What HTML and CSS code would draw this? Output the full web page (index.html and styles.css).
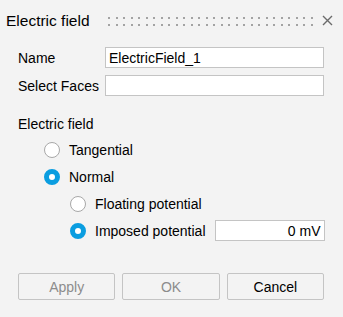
FILE: index.html
```html
<!DOCTYPE html>
<html lang="en">
<head>
    <meta charset="UTF-8">
    <title>Electric field</title>
    <link rel="stylesheet" href="styles.css">
</head>
<body>
    <div class="dialog">
        <div class="titlebar">
            <span class="title">Electric field</span>
            <svg class="grip" width="206" height="9" viewBox="0 0 206 9">
                <defs>
                    <pattern id="dots" width="15" height="7" patternUnits="userSpaceOnUse">
                        <rect x="0" y="0" width="2" height="2" fill="#a3a3a3"/>
                        <rect x="8" y="0" width="2" height="2" fill="#a3a3a3"/>
                    </pattern>
                </defs>
                <rect x="0" y="0" width="206" height="9" fill="url(#dots)"/>
            </svg>
            <svg class="close" width="11" height="11" viewBox="0 0 11 11">
                <path d="M1 1 L10 10 M10 1 L1 10" stroke="#6b6b6b" stroke-width="1.4" fill="none"/>
            </svg>
        </div>

        <!-- Name / faces -->
        <div class="fields">
            <label for="name">Name</label>
            <input type="text" id="name" value="ElectricField_1">
            <label for="faces">Select Faces</label>
            <input type="text" id="faces" value="">
        </div>

        <!-- Electric field options -->
        <div class="group">
            <div class="group-label">Electric field</div>
            <div class="radio-row level1">
                <span class="radio"></span>
                <span>Tangential</span>
            </div>
            <div class="radio-row level1">
                <span class="radio checked"></span>
                <span>Normal</span>
            </div>
            <div class="radio-row level2">
                <span class="radio"></span>
                <span>Floating potential</span>
            </div>
            <div class="radio-row level2">
                <span class="radio checked"></span>
                <span>Imposed potential</span>
                <input type="text" class="value-input" value="0 mV">
            </div>
        </div>

        <div class="buttons">
            <button disabled>Apply</button>
            <button disabled>OK</button>
            <button>Cancel</button>
        </div>
    </div>
</body>
</html>
```

FILE: styles.css
```css
body {
    margin: 0;
    background-color: #f3f3f3;
    font-family: "Liberation Sans", Arial, sans-serif;
    font-size: 14px;
    color: #000;
}
.dialog {
    width: 343px;
    height: 317px;
    padding: 0 19px 0 18px;
    box-sizing: border-box;
}
.titlebar {
    height: 40px;
    margin: 0 -19px 0 -12px;
    padding: 0 10px 0 0;
    display: flex;
    align-items: center;
}
.title {
    font-size: 15.5px;
    width: 102px;
    padding-top: 1px;
    white-space: nowrap;
}
.grip {
    display: block;
    margin-top: 2px;
}
.close {
    display: block;
    margin-left: auto;
}
.fields {
    margin-top: 7px;
    display: grid;
    grid-template-columns: 87px 1fr;
    row-gap: 7px;
    align-items: center;
}
input[type="text"] {
    height: 21px;
    padding: 0 3px;
    border: 1px solid #c4c4c4;
    background: white;
    font-family: inherit;
    font-size: 14px;
    color: #000;
    box-sizing: border-box;
    outline: none;
}
.fields input {
    width: 100%;
}
.group {
    margin-top: 18px;
}
.group-label {
    height: 20px;
    line-height: 20px;
}
.radio-row {
    height: 21px;
    margin-top: 6px;
    display: flex;
    align-items: center;
    gap: 9px;
    white-space: nowrap;
}
.group-label + .radio-row {
    margin-top: 5px;
}
.level1 {
    padding-left: 26px;
}
.level2 {
    padding-left: 52px;
}
.radio {
    flex: none;
    width: 16px;
    height: 16px;
    border: 1px solid #a8a8a8;
    border-radius: 50%;
    background: white;
    box-sizing: border-box;
}
.radio.checked {
    border: 5px solid #0a9de0;
}
.value-input {
    flex: none;
    width: 110px;
    margin-left: auto;
    text-align: right;
}
.buttons {
    margin-top: 32px;
    display: flex;
    gap: 7px;
}
button {
    flex: 1;
    height: 27px;
    background-color: #f3f3f3;
    border: 1px solid #c4c4c4;
    border-radius: 2px;
    font-family: inherit;
    font-size: 14px;
    color: #000;
    padding: 0;
}
button:disabled {
    color: #8c8c8c;
}
```
